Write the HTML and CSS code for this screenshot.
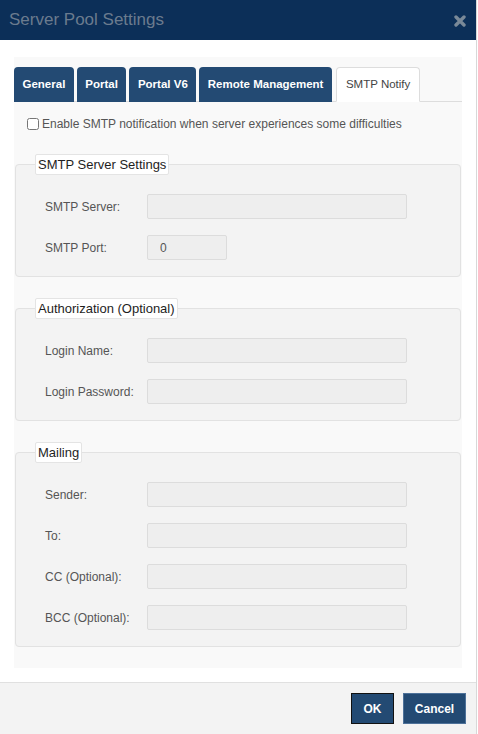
FILE: index.html
```html
<!DOCTYPE html>
<html>
<head>
<meta charset="utf-8">
<link rel="stylesheet" href="styles.css">
</head>
<body>
<div class="modal">
  <div class="modal-header">
    <h1 class="modal-title">Server Pool Settings</h1>
    <svg class="close" width="12" height="12" viewBox="0 0 12 12"><path d="M2 2 L10 10 M10 2 L2 10" stroke="#7a8998" stroke-width="3.4" stroke-linecap="round"/></svg>
  </div>
  <div class="modal-body">
    <div class="panel">
      <ul class="tabs">
        <li class="tab">General</li>
        <li class="tab">Portal</li>
        <li class="tab">Portal V6</li>
        <li class="tab">Remote Management</li>
        <li class="tab active">SMTP Notify</li>
      </ul>
      <label class="check-row"><input type="checkbox" class="check"><span>Enable SMTP notification when server experiences some difficulties</span></label>

      <fieldset class="group first">
        <legend>SMTP Server Settings</legend>
        <div class="row"><span class="lbl">SMTP Server:</span><input class="field" type="text"></div>
        <div class="row"><span class="lbl">SMTP Port:</span><input class="field short" type="text" value="0"></div>
      </fieldset>

      <fieldset class="group">
        <legend>Authorization (Optional)</legend>
        <div class="row"><span class="lbl">Login Name:</span><input class="field" type="text"></div>
        <div class="row"><span class="lbl">Login Password:</span><input class="field" type="text"></div>
      </fieldset>

      <fieldset class="group">
        <legend>Mailing</legend>
        <div class="row"><span class="lbl">Sender:</span><input class="field" type="text"></div>
        <div class="row"><span class="lbl">To:</span><input class="field" type="text"></div>
        <div class="row"><span class="lbl">CC (Optional):</span><input class="field" type="text"></div>
        <div class="row"><span class="lbl">BCC (Optional):</span><input class="field" type="text"></div>
      </fieldset>
    </div>
  </div>
  <div class="modal-footer">
    <button class="btn btn-ok">OK</button>
    <button class="btn btn-cancel">Cancel</button>
  </div>
</div>
</body>
</html>
```
FILE: styles.css
```css
* { box-sizing: border-box; }
html, body { margin: 0; padding: 0; background: #ffffff; }
body {
  font-family: "Liberation Sans", Arial, Helvetica, sans-serif;
  color: #333;
}
.modal {
  width: 477px;
  height: 734px;
  border-right: 1px solid #d8d8d8;
  display: flex;
  flex-direction: column;
  background: #fff;
}
.modal-header {
  height: 40px;
  flex: none;
  background: #0c2f58;
  display: flex;
  align-items: center;
  justify-content: space-between;
  padding: 0 10px 0 9px;
}
.modal-title {
  margin: 0;
  font-size: 17px;
  font-weight: normal;
  color: #6b7b8e;
  line-height: 20px;
  padding-bottom: 1px;
}
.close { display: block; margin-top: 2px; }
.modal-body {
  padding: 17px 14px 0 14px;
  flex: none;
}
.panel {
  background: #f9f9f9;
  padding: 10px 0 21px 0;
}
.tabs {
  list-style: none;
  margin: 0;
  padding: 0;
  display: flex;
  gap: 3px;
  border-bottom: 1px solid #dddddd;
  height: 35px;
}
.tab {
  height: 35px;
  padding: 0 8.5px;
  background: #234a73;
  color: #fff;
  font-size: 11.5px;
  font-weight: bold;
  line-height: 34px;
  border-radius: 4px 4px 0 0;
  margin-bottom: -1px;
}
.tab.active {
  background: #fff;
  color: #444;
  font-weight: normal;
  border: 1px solid #dddddd;
  border-bottom-color: #fff;
  padding: 0 9px;
  line-height: 33px;
  margin-left: 1px;
}
.check-row {
  display: flex;
  align-items: center;
  gap: 3px;
  margin: 15px 0 0 13px;
  font-size: 12px;
  color: #555;
  height: 14px;
}
.check {
  margin: 0;
  width: 12px;
  height: 12px;
}
.group {
  margin: 0 1px;
  padding: 0 0 16px 19px;
  border: 1px solid #e2e2e2;
  border-radius: 4px;
  background: #f3f3f3;
  display: flex;
  flex-direction: column;
  gap: 16px;
  margin-top: 21px;
}
.group.first { margin-top: 23px; }
.group legend {
  padding: 0 2px;
  margin: 0;
  background: #fff;
  border: 1px solid #e4e4e4;
  border-radius: 2px;
  font-size: 13px;
  line-height: 19px;
  color: #1e1e1e;
}
.row {
  display: flex;
  align-items: center;
  padding-left: 10px;
  height: 25px;
}
.group legend + .row { margin-top: 19px; }
.lbl {
  width: 102px;
  flex: none;
  font-size: 12px;
  color: #555;
}
.field {
  width: 260px;
  height: 25px;
  margin: 0;
  background: #eeeeee;
  border: 1px solid #dcdcdc;
  border-radius: 2px;
  padding: 0 12px;
  font-family: inherit;
  font-size: 12px;
  color: #555;
  outline: none;
}
.field.short { width: 80px; }
.modal-footer {
  margin-top: auto;
  height: 52px;
  flex: none;
  border-top: 1px solid #e0e0e0;
  background: #f3f3f3;
  display: flex;
  justify-content: flex-end;
  align-items: flex-start;
  gap: 9px;
  padding: 10px 10px 0 0;
}
.btn {
  height: 31px;
  margin: 0;
  background: #234a73;
  color: #fff;
  font-family: inherit;
  font-size: 12px;
  font-weight: bold;
  border-radius: 0;
  cursor: pointer;
}
.btn-ok { width: 43px; border: 1px solid #111; }
.btn-cancel { width: 63px; border: 1px solid #4d7199; }
```
